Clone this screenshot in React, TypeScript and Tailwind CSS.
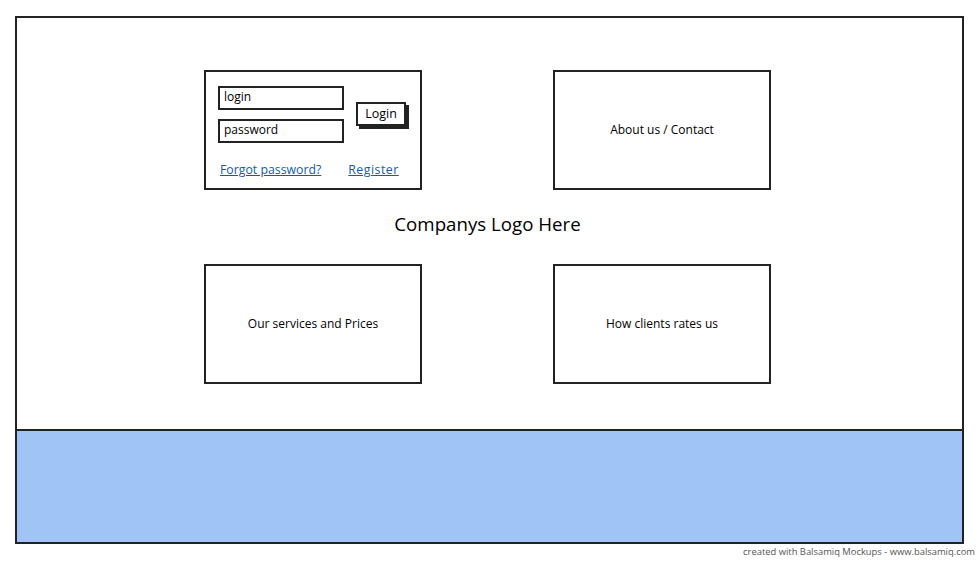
import React from "react";

const font = { fontFamily: '"Open Sans", "Noto Sans", Arial, sans-serif' };

function Box({ children, className = "" }: { children?: React.ReactNode; className?: string }) {
  return (
    <div className={`w-[218px] h-[120px] border-2 border-[#222] bg-white ${className}`}>{children}</div>
  );
}

export default function App() {
  return (
    <div className="w-[980px] h-[561px] bg-white relative overflow-hidden" style={font}>
      <div className="ml-[15px] pt-[16px]">
        <div className="w-[949px] border-2 border-[#222]">
          <div className="h-[411px] pt-[52px] pl-[187px]">
            <div className="flex gap-[131px]">
              <Box className="relative">
                <div className="flex pl-[12px] pt-[14px]">
                  <div className="flex flex-col gap-[9px]">
                    <div className="w-[126px] h-[24px] border-2 border-[#222] text-[12px] leading-[18px] pl-[4px] text-black">login</div>
                    <div className="w-[126px] h-[24px] border-2 border-[#222] text-[12px] leading-[18px] pl-[4px] text-black">password</div>
                  </div>
                  <div className="ml-[12px] mt-[16px] w-[50px] h-[24px] border-2 border-[#222] shadow-[3px_3px_0_#222] text-[12.5px] leading-[20px] text-center text-black">
                    Login
                  </div>
                </div>
                <div className="flex pl-[14px] mt-[19px] text-[12.3px] leading-[16px] text-[#1a58a6]">
                  <span className="underline">Forgot password?</span>
                  <span className="underline ml-[27px] tracking-[0.5px]">Register</span>
                </div>
              </Box>
              <Box className="flex items-center justify-center text-[12px] text-black">About us / Contact</Box>
            </div>
            <div className="h-[74px] w-[567px] flex items-center justify-center pb-[6px] text-[18.7px] text-black">
              Companys Logo Here
            </div>
            <div className="flex gap-[131px]">
              <Box className="flex items-center justify-center text-[12px] text-black">Our services and Prices</Box>
              <Box className="flex items-center justify-center text-[12px] text-black">How clients rates us</Box>
            </div>
          </div>
          <div className="h-[113px] border-t-2 border-[#222] bg-[#a0c4f5]" />
        </div>
        <div className="w-[960px] text-right text-[9.4px] leading-[14px] mt-[1px] text-[#555]">
          created with Balsamiq Mockups - www.balsamiq.com
        </div>
      </div>
    </div>
  );
}
